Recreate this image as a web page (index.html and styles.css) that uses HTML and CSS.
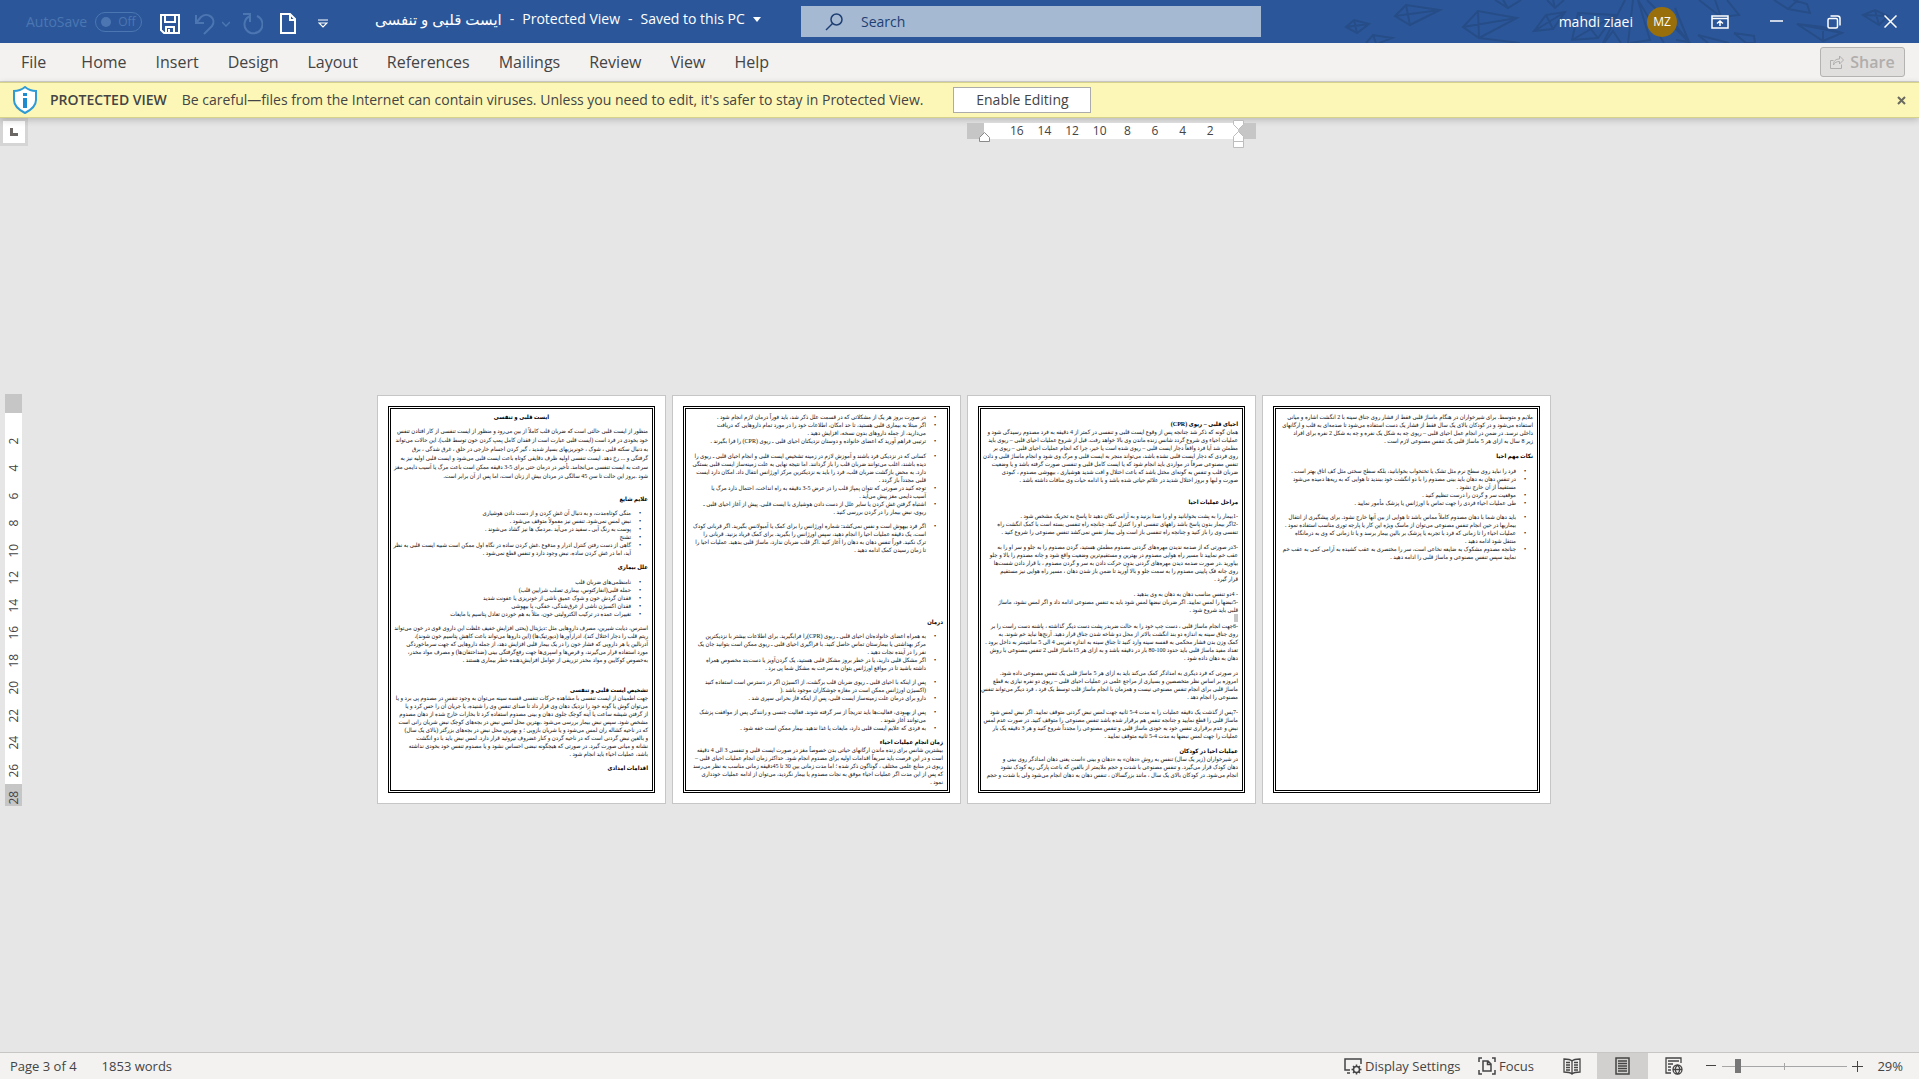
FILE: index.html
```html
<!DOCTYPE html>
<html lang="en">
<head>
<meta charset="utf-8">
<title>ایست قلبی و تنفسی - Protected View</title>
<link rel="stylesheet" href="styles.css">
</head>
<body>
<header class="titlebar">
  <svg class="doodles" width="640" height="43" viewBox="0 0 640 43" fill="none" stroke="#264d87" stroke-width="2" aria-hidden="true">
    <path d="M67 27l8-7 15 4-12 9zM75 20l3 13M67 27l23-3M87 43l7-8 19 3-15 6M94 35l3 8M116 16l11-11 34 5-30 15zM127 5l4 20M116 16l45-6M184 27l15-16 39 7-38 20zM199 11l1 27M184 27l54-9M200 38l41 5M216 0l13 8 13-8M224 0l5 8M268 0l8 8 9-8M276 8l-2-8M255 31l12-16 19-3-12 17zM267 15l7 14M255 31l31-19M293 40l6-27 37 2-17 23zM299 13l20 25M293 40l43-25M346 0l-22 43M354 0l-5 43M359 0l12 40-20 3M359 0l26 43M325 43l9-12 8 12M368 0l42 42-14-34M390 17l20 25-13-2M420 0l22 17 18-2-12-15M442 17l-6-17M419 35l31 8M419 35l10 8M455 33l20 3 1 7M455 33l12 10 9 0M495 0l14 9 22 4-3-9-14-4M509 9l10-9M518 24l26 17 19-8-19-6zM544 41l0-14M518 24l45 9M584 15l12-5 13 6-9 9zM596 10l4 15M584 15l25 1"/>
  </svg>
  <div class="quick">
    <label class="autosave"><span>AutoSave</span>
      <span class="toggle"><input type="checkbox" disabled>Off</span></label>
    <button class="tool save" aria-label="Save"><svg width="20" height="20" viewBox="0 0 20 20" fill="none" stroke="#fff" stroke-width="2"><path d="M1 1h18v18H4l-3-3zM5 1v7h10V1M6 19v-6h8v6M9 15v4"/></svg></button>
    <button class="tool undo" aria-label="Undo"><svg width="20" height="22" viewBox="0 0 20 22" fill="none" stroke="#4c76b2" stroke-width="2"><path d="M1 2v8h8M1 10l5-6c7-6 16 2 11 9l-8 8"/></svg></button>
    <button class="tool more" aria-label="Undo history"><svg width="8" height="6" viewBox="0 0 8 6" fill="none" stroke="#4c76b2" stroke-width="1.5"><path d="M0 1l4 4 4-4"/></svg></button>
    <button class="tool redo" aria-label="Redo"><svg width="20" height="22" viewBox="0 0 20 22" fill="none" stroke="#4c76b2" stroke-width="2"><path d="M0 1h7v8M7 3a9 9 0 1 0 7 0"/></svg></button>
    <button class="tool new" aria-label="New"><svg width="16" height="21" viewBox="0 0 16 21" fill="none" stroke="#fff" stroke-width="2"><path d="M1 1h9l5 5v14H1zM10 1v6h5"/></svg></button>
    <button class="tool custom" aria-label="Customize toolbar"><svg width="10" height="9" viewBox="0 0 10 9" fill="none" stroke="#fff" stroke-width="1.2"><path d="M0 1h10M1 4h8L5 8z"/></svg></button>
  </div>
  <h1 class="doc-title"><bdi>ایست قلبی و تنفسی</bdi><span>-</span><span>Protected View</span><span>-</span><span>Saved to this PC</span><svg width="8" height="5" viewBox="0 0 8 5"><path fill="#fff" d="M0 0h8L4 5z"/></svg></h1>
  <label class="search"><svg width="18" height="18" viewBox="0 0 18 18" fill="none" stroke="#1e3f73" stroke-width="1.5"><circle cx="11.500" cy="6.500" r="5.500"/><path d="M7.500 10.500L1 17"/></svg><input type="text" placeholder="Search" aria-label="Search"></label>
  <div class="account">
    <span>mahdi ziaei</span><span class="avatar">MZ</span>
    <button class="win" aria-label="Ribbon display options"><svg width="18" height="14" viewBox="0 0 18 14" fill="none" stroke="#fff" stroke-width="1.500"><path d="M1 1h16v12H1zM1 3.500h16M9 11V6M6 8.500L9 6l3 2.500"/></svg></button>
    <button class="win" aria-label="Minimize"><svg width="13" height="14" viewBox="0 0 13 14"><path d="M0 6h13" stroke="#fff" stroke-width="1.500"/></svg></button>
    <button class="win" aria-label="Restore"><svg width="14" height="14" viewBox="0 0 14 14" fill="none" stroke="#fff" stroke-width="1.500"><rect x="1" y="3.500" width="9.500" height="9.500" rx="1.500"/><path d="M3.500 1h7q2.500 0 2.500 2.500v7"/></svg></button>
    <button class="win" aria-label="Close"><svg width="13" height="13" viewBox="0 0 13 13"><path d="M0.500 0.500l12 12M12.500 0.500l-12 12" stroke="#fff" stroke-width="1.500"/></svg></button>
  </div>
</header>

<nav class="tabs">
  <a href="#file" class="file">File</a><a href="#home">Home</a><a href="#insert">Insert</a><a href="#design">Design</a><a href="#layout">Layout</a><a href="#references">References</a><a href="#mailings">Mailings</a><a href="#review">Review</a><a href="#view">View</a><a href="#help">Help</a>
  <button class="share" disabled><svg width="14" height="14" viewBox="0 0 14 14" fill="none" stroke="#b0aeac" stroke-width="1"><path d="M3.500 5.500h-3v8h11v-4M3.500 10c0-4 2-6 6-6V1l4 4-4 4V6.500c-3 0-5 1-6 3.500z"/></svg>Share</button>
</nav>

<div class="notice" role="status">
  <svg width="24" height="28" viewBox="0 0 24 28"><path d="M12 1c3 2.500 7 4 11 4v9c0 6-5 10-11 13C6 24 1 20 1 14V5c4 0 8-1.500 11-4z" fill="#fff" stroke="#2e9bd6" stroke-width="2"/><path d="M10 7h4v3h-4zM10 12h4v10h-4z" fill="#1e8bd0"/></svg>
  <strong>PROTECTED VIEW</strong>
  <p>Be careful—files from the Internet can contain viruses. Unless you need to edit, it's safer to stay in Protected View.</p>
  <button class="enable">Enable Editing</button>
  <button class="dismiss" aria-label="Close message"><svg width="9" height="9" viewBox="0 0 9 9"><path d="M1 1l7 7M8 1L1 8" stroke="#6a6a60" stroke-width="2"/></svg></button>
</div>

<main class="workspace">
  <button class="tabstop" aria-label="Tab stop"><svg width="8" height="8" viewBox="0 0 8 8"><path fill="#6b6765" d="M0 0h3v5h5v3H0z"/></svg></button>
  <div class="ruler-row">
    <div class="hruler">
      <div class="hscale"><span>16</span><span>14</span><span>12</span><span>10</span><span>8</span><span>6</span><span>4</span><span>2</span></div>
      <svg class="mark left" width="11" height="10" viewBox="0 0 11 10"><path d="M.5 9.500V5.500L5.500 .5l5 5v4z" fill="#fff" stroke="#8a8a8a"/></svg>
      <svg class="mark right" width="11" height="28" viewBox="0 0 11 28" fill="#fff" stroke="#bdbdbd"><path d="M.5 .5h10v4l-5 5-5-5zM.5 21.500v-5l5-5 5 5v5zM.5 21.500h10v6H.5z"/></svg>
    </div>
  </div>
  <div class="vruler"><span>2</span><span>4</span><span>6</span><span>8</span><span>10</span><span>12</span><span>14</span><span>16</span><span>18</span><span>20</span><span>22</span><span>24</span><span>26</span><span>28</span></div>
  <div class="pages" lang="fa" dir="rtl">
    <article class="page"><div class="frame">
      <h2 class="center">ایست قلبی و تنفسی</h2>
      <p class="gap-s loose">منظور از ایست قلبی حالتی است که ضربان قلب کاملاً از بین می‌رود و منظور از ایست تنفسی از کار افتادن تنفس<br>خود بخودی در فرد است (ایست قلبی عبارت است از فقدان کامل پمپ کردن خون توسط قلب). این حالات می‌تواند<br>به دنبال سکته قلبی ، شوک ، خونریزیهای بسیار شدید ، گیر کردن اجسام خارجی در حلق ، غرق شدگی ، برق<br>گرفتگی و ... رخ دهد. ایست تنفسی اولیه ظرف دقایقی کوتاه باعث ایست قلبی می‌شود و ایست قلبی اولیه نیز به<br>سرعت به ایست تنفسی می‌انجامد. تأخیر در درمان حتی برای 5-3 دقیقه ممکن است باعث مرگ یا آسیب دایمی مغز<br>شود .بروز این حالت تا سن 45 سالگی در مردان بیش از زنان است، اما پس از آن برابر است.</p>
      <h2 class="gap-l">علایم شایع</h2>
      <ul class="gap-s"><li>منگی کوتاه‌مدت، و به دنبال آن غش کردن و از دست دادن هوشیاری</li><li>نبض لمس نمی‌شود. تنفس نیز معمولاً متوقف می‌شود .</li><li>پوست به رنگ آبی ـ سفید در می‌آید .مردمک ها نیز گشاد می‌شوند .</li><li>تشنج</li><li>گاهی از دست رفتن کنترل ادرار و مدفوع .غش کردن ساده در نگاه اول ممکن است شبیه ایست قلبی به نظر<br>آید، اما در غش کردن ساده، نبض وجود دارد و تنفس قطع نمی‌شود .</li></ul>
      <h2 class="gap-s">علل بیماری</h2>
      <ul class="gap-m"><li>نامنظمی‌های ضربان قلب</li><li>حمله قلبی(انفارکتوس، بیماری تصلب شرایین قلب)</li><li>فقدان گردش خون و شوک عمیق ناشی از خونریزی یا عفونت شدید</li><li>فقدان اکسیژن ناشی از غرق‌شدگی، خفگی، یا بیهوشی</li><li>تغییرات عمده در ترکیب الکترولیتی خون، مثلاً به هم خوردن تعادل پتاسیم یا مایعات</li></ul>
      <p class="gap-s">استرس، دیابت شیرین، مصرف داروهایی مثل :دیژیتال (یحتی افزایش خفیف غلظت این داروی قوی در خون می‌تواند<br>ریتم قلب را دچار اختلال کند)، ادرارآورها (دیورتیک‌ها) (این داروها می‌تواند باعث کاهش پتاسیم خون شوند)،<br>آدرنالین یا هر دارویی که فشار خون را در یک بیمار قلبی افزایش دهد، از جمله داروهایی که جهت سرماخوردگی<br>مورد استفاده قرار می‌گیرند، و قرص‌ها و اسپری‌ها جهت رفع‌گرفتگی بینی (ضداحتقان‌ها) و مصرف مواد مخدر،<br>به‌خصوص کوکایین و مواد مخدر تزریقی از عوامل افزایش‌دهنده خطر بیماری هستند .</p>
      <h2 class="gap-xl">تشخیص ایست قلبی و تنفسی</h2>
      <p>جهت اطمینان از ایست تنفسی با مشاهده حرکات تنفسی قفسه سینه می‌توان به وجود تنفس در مصدوم پی برد و یا<br>می‌توان گوش یا گونه خود را نزدیک دهان وی قرار داد تا صدای تنفس وی را شنیده، یا جریان آن را حس کرد و یا<br>از گرفتن شیشه ساعت یا آینه کوچک جلوی دهان و بینی مصدوم استفاده کرد تا بخارات خارج شده از دهان مصدوم<br>مشخص شود. سپس نبض بیمار بررسی می‌شود .بهترین محل لمس نبض در بچه‌های کوچک نبض شریان رانی است<br>که در ناحیه کشاله ران لمس می‌شود و یا شریان بازویی ؛ و بهترین محل نبض در بچه‌های بزرگتر (بالای یک سال)<br>و بالغین نبض گردنی است که در ناحیه گردن و کنار غضروف تیروئید قرار دارد. لمس نبض باید با دو انگشت<br>نشانه و میانی صورت گیرد. در صورتی که هیچگونه نبضی احساس نشود و یا مصدوم تنفس خود بخودی نداشته<br>باشد، عملیات احیاء باید انجام شود .</p>
      <h2 class="gap-s">اقدامات امدادی</h2>
    </div></article>

    <article class="page"><div class="frame">
      <ul><li>در صورت بروز هر یک از مشکلاتی که در قسمت علل ذکر شد، باید فوراً درمان لازم انجام شود .</li><li>اگر مبتلا به بیماری قلبی هستید، تا حد امکان، اطلاعات خود را در مورد تمام داروهایی که دریافت<br>می‌دارید، از جمله داروهای بدون نسخه، افزایش دهید .</li><li>ترتیبی فراهم آورید که اعضای خانواده و دوستان نزدیکتان احیای قلبی ـ ریوی (CPR) را فرا بگیرند .</li></ul>
      <ul class="gap-m"><li>کسانی که در نزدیکی فرد باشند و آموزش لازم در زمینه تشخیص ایست قلبی و انجام احیای قلبی ـ ریوی را<br>دیده باشند، اغلب می‌توانند ضربان قلب را باز گردانند. اما نتیجه نهایی به علت زمینه‌ساز ایست قلبی بستگی<br>دارد. به محض بازگشت ضربان قلب، فرد را باید به نزدیکترین مرکز اورژانس انتقال داد. امکان دارد ایست<br>قلبی مجدداً باز گردد .</li><li>توجه کنید در صورتی که نتوان پمپاژ قلب را در عرض 5-3 دقیقه به راه انداخت، احتمال دارد مرگ یا<br>آسیب دایمی مغز پیش می‌آید .</li><li>اشتباه گرفتن غش کردن یا سایر علل از دست دادن هوشیاری با ایست قلبی. پیش از آغاز احیای قلبی ـ<br>ریوی، نبض بیمار را در گردن بررسی کنید .</li></ul>
      <ul class="gap-s"><li>اگر فرد بیهوش است و نفس نمی‌کشد: شماره اورژانس را برای کمک یا آمبولانس بگیرید. اگر قربانی کودک<br>است، یک دقیقه عملیات احیا را انجام دهید، سپس اورژانس را بگیرید. برای کمک فریاد بزنید. قربانی را<br>ترک نکنید. فوراً تنفس دهان به دهان را آغاز کنید .اگر قلب ضربان ندارد، ماساژ قلبی بدهید. عملیات احیا را<br>تا زمان رسیدن کمک ادامه دهید .</li></ul>
      <h2 class="gap-xxl">درمان</h2>
      <ul class="gap-s"><li>به همراه اعضای خانواده‌تان احیای قلبی ـ ریوی (CPR)را فرابگیرید. برای اطلاعات بیشتر با نزدیکترین<br>مرکز بهداشتی یا بیمارستان تماس حاصل کنید. با فراگیری احیای قلبی ـ ریوی ممکن است بتوانید جان یک<br>نفر را در آینده نجات دهید .</li><li>اگر مشکل قلبی دارید، یا در خطر بروز مشکل قلبی هستید، یک گردن‌آویز یا دست‌بند مخصوص همراه<br>داشته باشید تا در مواقع اورژانس بتوان به سرعت به مشکل شما پی برد .</li></ul>
      <ul class="gap-s"><li>پس از اینکه با احیای قلبی ـ ریوی ضربان قلب برگشت، از اکسیژن اگر در دسترس است استفاده کنید<br>(اکسیژن اورژانس ممکن است در مغازه جوشکاران موجود باشد .(</li><li>دارو برای درمان علت زمینه‌ساز ایست قلبی، پس از اینکه فاز بحرانی سپری شد .</li></ul>
      <ul class="gap-s"><li>پس از بهبودی، فعالیت‌ها باید تدریجاً از سر گرفته شوند. فعالیت جنسی و رانندگی پس از موافقت پزشک<br>می‌توانند آغاز شوند .</li><li>به فردی که علایم ایست قلبی دارد، مایعات یا غذا ندهید. بیمار ممکن است خفه شود .</li></ul>
      <h2 class="gap-s">زمان انجام عملیات احیاء</h2>
      <p>بیشترین شانس برای زنده ماندن ارگانهای حیاتی بدن خصوصاً مغز در صورت ایست قلبی و تنفسی 3 الی 4 دقیقه<br>است و در این فرصت باید سریعاً اقدامات اولیه برای مصدوم انجام شود. حداکثر زمان انجام عملیات احیای قلبی –<br>ریوی در منابع علمی مختلف ، گوناگون ذکر شده ؛ اما مدت زمانی بین 30 تا 45دقیقه زمانی مناسب به نظر می‌رسد<br>که پس از این مدت اگر عملیات احیاء موفق به نجات مصدوم یا بیمار نگردید، می‌توان از ادامه عملیات خودداری<br>نمود .</p>
    </div></article>

    <article class="page"><div class="frame">
      <h2 class="gap-m">احیای قلبی – ریوی (CPR)</h2>
      <p>همان گونه که ذکر شد چنانچه پس از وقوع ایست قلبی و تنفسی در کمتر از 4 دقیقه به فرد مصدوم رسیدگی شود و<br>عملیات احیاء وی شروع گردد شانس زنده ماندن وی بالا خواهد رفت. قبل از شروع عملیات احیای قلبی – ریوی باید<br>مطمئن شد آیا فرد واقعاً دچار ایست قلبی – ریوی شده است یا خیر، چرا که انجام عملیات احیای قلبی – ریوی بر<br>روی فردی که دچار ایست قلبی نشده باشد، می‌تواند منجر به ایست قلبی و مرگ وی شود و انجام ماساژ قلبی و دادن<br>تنفس مصنوعی صرفاً در مواردی باید انجام شود که یا ایست کامل قلبی و تنفسی صورت گرفته باشد و یا وضعیت<br>ضربان قلب و تنفس به گونه‌ای مختل باشد که باعث اختلال و افت شدید هوشیاری ، بیهوشی مصدوم ، کبودی<br>صورت و لبها و بروز اختلال شدید در علائم حیاتی شده باشد و با ادامه حیات وی منافات داشته باشد .</p>
      <h2 class="gap-l">مراحل عملیات احیا</h2>
      <p class="gap-s">-1بیمار را به پشت بخوابانید و او را صدا بزنید و به آرامی تکان دهید تا پاسخ به تحریک مشخص شود .<br>-2اگر بیمار بدون پاسخ باشد راههای تنفسی او را کنترل کنید. چنانچه راه تنفسی بسته است با کمک انگشت راه<br>تنفسی وی را باز کنید و چنانچه راه تنفسی باز است ولی بیمار نفس نمی‌کشد تنفس مصنوعی را شروع کنید .</p>
      <p class="gap-m">-3در صورتی که از صدمه ندیدن مهره‌های گردنی مصدوم مطمئن هستید، گردن مصدوم را به جلو و سر او را به<br>عقب خم نمایید تا مسیر راه هوایی مصدوم در بهترین و مستقیم‌ترین وضعیت واقع شود و چانه مصدوم را بالا و جلو<br>بیاورید .در صورت صدمه دیدن مهره‌های گردنی بدون حرکت دادن به سر و گردن مصدوم ، با قرار دادن شست‌ها<br>روی چانه فک پایینی مصدوم را به سمت جلو و بالا آورید تا ضمن باز شدن دهان ، مسیر راه هوایی نیز مستقیم<br>قرار گیرد .</p>
      <p class="gap-m">- 4دو تنفس مناسب دهان به دهان به وی بدهید .<br>-5نبضها را لمس نمایید. اگر ضربان نبضها لمس شود باید به تنفس مصنوعی ادامه داد و اگر لمس نشود، ماساژ<br>قلبی باید شروع شود .</p>
      <span class="caret"></span>
      <p>-6جهت انجام ماساژ قلبی ، دست چپ خود را به حالت ضربدر پشت دست دیگر گذاشته ، پاشنه دست راست را بر<br>روی جناق سینه به اندازه دو بند انگشت بالاتر از محل دو شاخه شدن جناق قرار دهید. آرنج‌ها نباید خم شوند. به<br>کمک وزن بدن فشار محکمی به قفسه سینه وارد کنید تا جناق سینه به اندازه تقریبی 4 الی 5 سانتیمتر به داخل برود .<br>تعداد مفید ماساژ قلبی باید حدود 100-80 بار در دقیقه باشد و به ازای هر 15ماساژ قلبی 2 تنفس مصنوعی با روش<br>دهان به دهان داده شود .</p>
      <p class="gap-m">در صورتی که فرد دیگری به امدادگر کمک می‌کند باید به ازای هر 5 ماساژ قلبی یک تنفس مصنوعی داده شود.<br>امروزه بر اساس نظر متخصصین و بسیاری از مراجع علمی در عملیات احیای قلبی – ریوی دو نفره نیازی به قطع<br>ماساژ قلبی برای انجام تنفس مصنوعی نیست و همزمان با انجام ماساژ قلب توسط یک فرد ، فرد دیگر می‌تواند تنفس<br>مصنوعی را انجام دهد .</p>
      <p class="gap-m">-7پس از گذشت یک دقیقه عملیات را به مدت 4-5 ثانیه جهت لمس نبض گردنی متوقف نمایید. اگر نبض لمس شود<br>ماساژ قلبی را قطع نمایید و چنانچه تنفس هم برقرار شده باشد تنفس مصنوعی را متوقف کنید. در صورت عدم لمس<br>نبض و عدم برقراری تنفس خود به خودی ماساژ قلبی و تنفس مصنوعی را مجدداً شروع کنید و هر 3 دقیقه یک بار<br>عملیات را جهت لمس نبضها به مدت 4-5 ثانیه متوقف نمایید .</p>
      <h2 class="gap-m">عملیات احیا در کودکان</h2>
      <p>در شیرخواران (زیر یک سال) تنفس به روش «دهان» به «دهان و بینی »است یعنی دهان امدادگر روی بینی و<br>دهان کودک قرار می‌گیرد. و تنفس مصنوعی با شدت و حجم ملایمتر از بالغین که باعث پارگی ریه کودک نشود<br>انجام می‌شود. در کودکان بالای یک سال ، مانند بزرگسالان ، تنفس دهان به دهان انجام می‌شود ولی با شدت و حجم</p>
    </div></article>

    <article class="page"><div class="frame">
      <p>ملایم و متوسط. برای شیرخواران در هنگام ماساژ قلبی فقط از فشار روی جناق سینه با 2 انگشت اشاره و میانی<br>استفاده می‌شود و در کودکان بالای یک سال فقط از فشار یک دست استفاده می‌شود تا صدمه‌ای به قلب و ارگانهای<br>داخلی نرسد. در ضمن در انجام عمل احیای قلبی – ریوی چه به شکل یک نفره و چه به شکل 2 نفره برای افراد<br>زیر 8 سال به ازای هر 5 ماساژ قلبی یک تنفس مصنوعی لازم است .</p>
      <h2 class="gap-m">نکات مهم احیا</h2>
      <ul class="gap-m"><li>فرد را نباید روی سطح نرم مثل تشک یا تختخواب بخوابانید، بلکه سطح سختی مثل کف اتاق بهتر است .</li><li>در تنفس دهان به دهان باید بینی مصدوم را با دو انگشت خود ببندید تا هوایی که به ریه‌ها دمیده می‌شود<br>مستقیماً از آن خارج نشود .</li><li>موقعیت سر و گردن را درست تنظیم کنید .</li><li>طی عملیات احیاء فردی را جهت تماس با اورژانس یا پزشک مأمور نمایید .</li></ul>
      <ul class="gap-s"><li>باید دهان شما با دهان مصدوم کاملاً مماس باشد تا هوایی از بین آنها خارج نشود. برای پیشگیری از انتقال<br>بیماریها در حین انجام تنفس مصنوعی می‌توان از ماسک ویژه این کار یا پارچه توری مناسب استفاده نمود .</li><li>عملیات احیاء را تا زمانی که فرد با تجربه یا پزشک بر بالین بیمار برسد و یا تا زمانی که وی به درمانگاه<br>منتقل شود ادامه دهید .</li><li>چنانچه مصدوم مشکوک به ضایعه نخاعی است، سر را مختصری به عقب کشیده به آرامی کمی به عقب خم<br>نمایید سپس تنفس مصنوعی و ماساژ قلبی را ادامه دهید .</li></ul>
    </div></article>
  </div>
</main>

<footer class="status">
  <span>Page 3 of 4</span><span class="words">1853 words</span>
  <button class="opt display"><svg width="18" height="18" viewBox="0 0 18 18" fill="none" stroke="#444" stroke-width="1.500"><path d="M6 13H1V2h16v5M3 16h3"/><circle cx="12.500" cy="12.500" r="3"/><path d="M12.500 7.500v2M12.500 15.500v2M7.500 12.500h2M15.500 12.500h2M9 9l1.500 1.500M14.500 14.500L16 16M9 16l1.500-1.500M14.500 10.500L16 9"/></svg>Display Settings</button>
  <button class="opt focus"><svg width="18" height="18" viewBox="0 0 18 18" fill="none" stroke="#444" stroke-width="1.500"><path d="M1 5V1h3M14 1h3v4M17 13v4h-3M4 17H1v-4M5 4h5l3 3v7H5zM9.500 4v3.500H13"/></svg>Focus</button>
  <button class="mode" aria-label="Read mode"><svg width="18" height="17" viewBox="0 0 18 17" fill="none" stroke="#444" stroke-width="1.300"><path d="M9 3C7 1 4 1 1 1v13c3 0 6 0 8 2 2-2 5-2 8-2V1c-3 0-6 0-8 2zM9 3v13M3 4.500h4M3 7h4M3 9.500h4M3 12h4M11 4.500h4M11 7h4M11 9.500h4M11 12h4"/></svg></button>
  <button class="mode on" aria-label="Print layout"><svg width="15" height="18" viewBox="0 0 15 18" fill="none" stroke="#444" stroke-width="1.500"><path d="M1 1h13v16H1zM3 4h9M3 6.500h9M3 9h9M3 11.500h9M3 14h9"/></svg></button>
  <button class="mode" aria-label="Web layout"><svg width="18" height="18" viewBox="0 0 18 18" fill="none" stroke="#444" stroke-width="1.300"><path d="M6 16H1V1h15v5M3 4h11M3 7h5M3 10h3M3 13h3"/><circle cx="12.500" cy="12.500" r="4.500"/><path d="M8 12.500h9M12.500 8c-3 3-3 6 0 9M12.500 8c3 3 3 6 0 9"/></svg></button>
  <button class="zoom minus" aria-label="Zoom out"><svg width="10" height="10" viewBox="0 0 10 10"><path d="M0 4.500h10" stroke="#444"/></svg></button>
  <input class="slider" type="range" min="0" max="100" value="11" aria-label="Zoom">
  <button class="zoom" aria-label="Zoom in"><svg width="11" height="11" viewBox="0 0 11 11"><path d="M0 5.500h11M5.500 0v11" stroke="#444"/></svg></button>
  <span class="percent">29%</span>
</footer>
</body>
</html>
```

FILE: styles.css
```css
* { box-sizing: border-box; }
body {
  margin: 0;
  min-height: 100vh;
  display: flex;
  flex-direction: column;
  background: #e6e6e6;
  color: #444;
  font: 14px/20px "Open Sans", "DejaVu Sans", sans-serif;
}
button { margin: 0; padding: 0; border: 0; background: none; color: inherit; font: inherit; }
svg { display: block; flex: none; }
p, h1, h2, ul { margin: 0; padding: 0; }

/* Title bar */
.titlebar {
  position: relative;
  display: grid;
  grid-template-columns: 375px 426px 460px 1fr;
  align-items: center;
  height: 43px;
  background: #2b579a;
  color: #fff;
}
.titlebar > * { position: relative; }
.titlebar > .doodles { position: absolute; right: 0; top: 0; }
.quick { display: flex; align-items: center; padding-left: 26px; }
.autosave { display: flex; align-items: center; gap: 8px; width: 134px; color: #4c76b2; }
.toggle {
  display: flex; align-items: center; gap: 7px;
  width: 47px; height: 20px; padding-left: 5px;
  border: 1px solid #4c76b2; border-radius: 10px;
  font-size: 12px;
}
.toggle input { appearance: none; width: 10px; height: 10px; margin: 0; border-radius: 50%; background: #4c76b2; }
.tool { display: flex; margin-top: 4px; }
.undo { margin-left: 15px; }
.more { margin-left: 7px; }
.redo { margin-left: 13px; }
.new { margin-left: 17px; }
.custom { margin-left: 22px; }
.doc-title { display: flex; align-items: center; gap: 8px; height: 38px; font-size: 14px; font-weight: 400; white-space: nowrap; align-self: start; }
.doc-title bdi { font-size: 15px; }
.search { display: flex; align-items: center; gap: 18px; height: 31px; padding-left: 24px; background: #a6b9d2; }
.search input { flex: 1; border: 0; padding: 0; outline: 0; background: none; font: inherit; color: #1e3f73; }
.search input::placeholder { color: #1e3f73; opacity: 1; }
.account { display: flex; align-items: center; justify-content: flex-end; }
.avatar { width: 30px; height: 30px; margin: 0 14px; border-radius: 50%; background: #986f0b; font-size: 12px; line-height: 30px; text-align: center; }
.win { display: flex; justify-content: center; width: 57px; height: 14px; }

/* Ribbon tabs */
.tabs { display: flex; align-items: center; gap: 29px; height: 39px; padding: 0 14px 0 21px; background: #f3f2f1; border-bottom: 1px solid #d2d0ce; font-size: 16px; }
.tabs a { color: #444; text-decoration: none; }
.file { margin-right: 6px; }
.share { display: flex; align-items: center; justify-content: center; gap: 6px; width: 85px; height: 30px; margin-left: auto; border: 1px solid #b5b3b1; border-radius: 3px; background: #e1dfdd; color: #b0aeac; font-weight: 600; }

/* Message bar */
.notice { position: relative; display: flex; align-items: center; height: 36px; padding: 0 13px; background: #fcf7b6; border: solid #d6d28c; border-width: 1px 0; box-shadow: 0 2px 7px #0003; white-space: nowrap; }
.notice strong { margin: 0 15px 0 13px; font-weight: 600; }
.enable { width: 138px; height: 26px; margin-left: 30px; border: 1px solid #ababab; background: #fff; }
.dismiss { margin-left: auto; }

/* Document area */
.workspace { flex: 1; display: grid; grid-template-columns: 28px 1fr; grid-template-rows: 29px 1fr; }
.tabstop { display: flex; align-items: center; justify-content: center; width: 28px; height: 28px; border: 3px solid #d5d5d5; background: #fff; }
.ruler-row, .pages { display: grid; grid-template-columns: repeat(4, 289px); column-gap: 6px; justify-content: center; padding-right: 19px; }
.hruler { position: relative; grid-column: 3; align-self: start; height: 16px; margin-top: 5px; padding: 0 18px 0 17px; background: #c6c6c6; font: 12px/16px "Open Sans", sans-serif; }
.hscale { display: flex; padding: 0 14px 0 19px; background: #fff; }
.hscale span { flex: 1; text-align: center; }
.mark { position: absolute; }
.mark.left { left: 12px; top: 9px; }
.mark.right { right: 12px; top: -3px; }
.vruler { align-self: center; display: flex; flex-direction: column; width: 17px; height: 412px; margin-left: 5px; padding-top: 33px; overflow: hidden; background: linear-gradient(#c6c6c6 19px, #fff 19px 390px, #c6c6c6 390px); font: 12px/17px "Open Sans", sans-serif; }
.vruler span { flex: none; width: 17px; height: calc(385px / 14); writing-mode: vertical-rl; transform: rotate(180deg); text-align: center; }

/* Document pages */
.pages { direction: ltr; align-items: center; }
.page { height: 409px; padding: 10px; border: 1px solid #c6c6c6; background: #fff; direction: rtl; }
.frame { height: 387px; padding: 4px; border: 3px double #000; color: #111; font: 6px/8px "Liberation Serif", "DejaVu Sans Condensed", "DejaVu Sans", serif; white-space: nowrap; }
.frame h2 { color: #000; font-size: 6px; line-height: 8px; font-weight: 700; }
.frame ul { list-style: none; padding-right: 17px; }
.frame li::before { content: "•"; float: right; width: 10px; margin-right: -10px; }
.frame .center { text-align: center; }
.frame .loose { line-height: 9px; }
.gap-s { margin-top: 6px; }
.gap-m { margin-top: 7px; }
.gap-l { margin-top: 14px; }
.gap-xl { margin-top: 22px; }
.gap-xxl { margin-top: 64px; }
.caret { display: block; width: 4px; height: 8px; background: #c6c6c6; }

/* Status bar */
.status { display: flex; align-items: center; height: 27px; padding: 0 16px 0 10px; background: #f3f2f1; border-top: 1px solid #c8c6c4; font-size: 13px; white-space: nowrap; }
.words { margin-left: 25px; }
.opt { display: flex; align-items: center; gap: 3px; }
.display { margin-left: auto; width: 134px; }
.focus { width: 68px; }
.mode { display: flex; align-items: center; justify-content: center; width: 51px; height: 26px; }
.mode.on { background: #d2d0ce; }
.zoom.minus { margin-left: 7px; }
.slider { appearance: none; width: 125px; height: 14px; margin: 0 5px 0 6px; background: linear-gradient(#a6a6a6, #a6a6a6) 62px 50% / 1px 7px no-repeat, linear-gradient(#a6a6a6, #a6a6a6) 0 50% / 100% 1px no-repeat; }
.slider::-webkit-slider-thumb { appearance: none; width: 6px; height: 14px; background: #777; }
.percent { width: 40px; text-align: right; }
```
